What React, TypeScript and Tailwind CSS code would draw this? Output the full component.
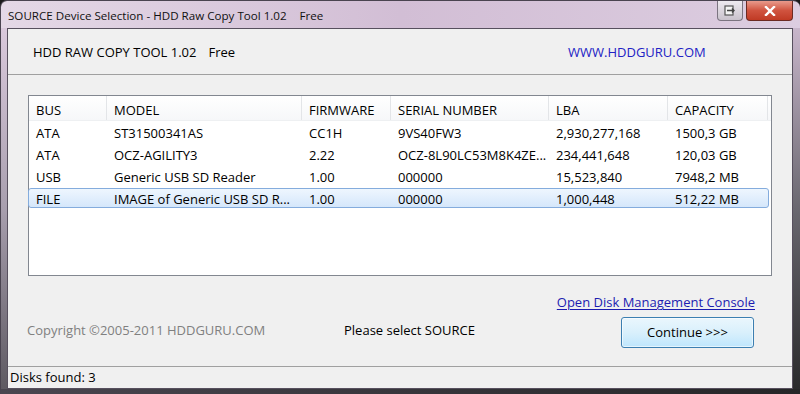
import React from "react";

const cols = [78, 195, 89, 158, 119, 100];
const headers = ["BUS", "MODEL", "FIRMWARE", "SERIAL NUMBER", "LBA", "CAPACITY"];
const rows = [
  ["ATA", "ST31500341AS", "CC1H", "9VS40FW3", "2,930,277,168", "1500,3 GB"],
  ["ATA", "OCZ-AGILITY3", "2.22", "OCZ-8L90LC53M8K4ZE...", "234,441,648", "120,03 GB"],
  ["USB", "Generic USB SD Reader", "1.00", "000000", "15,523,840", "7948,2 MB"],
  ["FILE", "IMAGE of Generic USB SD R...", "1.00", "000000", "1,000,448", "512,22 MB"],
];

function Cells({ r, sep }: { r: string[]; sep?: boolean }) {
  return (
    <>
      {r.map((c, i) => (
        <div
          key={i}
          style={{ width: cols[i] }}
          className={`shrink-0 pl-[7px] whitespace-nowrap overflow-hidden ${sep ? "border-r border-[#e3e5e8] h-full flex items-center pt-[6px]" : "pt-[4px]"}`}
        >
          {c}
        </div>
      ))}
    </>
  );
}

export default function App() {
  return (
    <div
      className="w-[800px] h-[394px] overflow-hidden bg-[#1a1a1a] text-[13px] text-black"
      style={{ fontFamily: '"Open Sans", "Noto Sans", sans-serif' }}
    >
      <div className="w-full h-full flex flex-col rounded-tl-[7px] rounded-tr-[7px] overflow-hidden border-l border-t border-[#4a4450]">
        {/* Title bar */}
        <div className="h-[27px] shrink-0 flex bg-gradient-to-r from-[#e4d8e6] via-[#d2bed5] to-[#dccde0]">
          <div className="pl-[7px] pt-[7px] flex text-[11.6px] leading-[16px] text-[#111]">
            <span>SOURCE Device Selection - HDD Raw Copy Tool 1.02</span>
            <span className="ml-[13px]">Free</span>
          </div>
          <div className="ml-auto flex items-start gap-[3px] mr-[7px]">
            <div className="w-[26px] h-[20px] rounded-b-[4px] border border-t-0 border-[#7b7480] bg-gradient-to-b from-[#eeeaf0] to-[#c9c2cc] flex items-center justify-center">
              <svg width="12" height="11" viewBox="0 0 12 11">
                <rect x="1" y="1" width="8" height="9" fill="#f4f4f4" stroke="#555" strokeWidth="1.2" />
                <path d="M3 5.5h7M8 3.5l2 2-2 2" stroke="#444" strokeWidth="1.4" fill="none" />
              </svg>
            </div>
            <div className="w-[47px] h-[20px] rounded-b-[4px] border border-t-0 border-[#6b2a22] bg-gradient-to-b from-[#e89a8c] via-[#d0533f] to-[#c03a24] flex items-center justify-center">
              <svg width="12" height="10" viewBox="0 0 12 10">
                <path d="M2 1l8 8M10 1L2 9" stroke="#ffffff" strokeWidth="2.4" strokeLinecap="square" />
              </svg>
            </div>
          </div>
        </div>
        {/* Middle */}
        <div className="flex flex-1 min-h-0">
          <div className="w-[6px] shrink-0 bg-gradient-to-b from-[#dac9dc] via-[#a89fae] to-[#5e5a62]" />
          <div className="w-[786px] shrink-0 border border-[#57505e] bg-[#f0f0f0] flex flex-col">
            {/* header */}
            <div className="h-[46px] shrink-0 flex items-center pt-[2px] border-b border-[#a0a0a0]">
              <div className="ml-[25px] w-[535px] flex">
                <span>HDD RAW COPY TOOL 1.02</span>
                <span className="ml-[12px]">Free</span>
              </div>
              <span className="text-[#2222c4]">WWW.HDDGURU.COM</span>
            </div>
            {/* main */}
            <div className="h-[291px] shrink-0 flex flex-col">
              <div className="ml-[20px] mt-[20px] w-[744px] h-[181px] border border-[#828790] bg-white flex flex-col">
                <div className="h-[25px] shrink-0 flex items-center bg-gradient-to-b from-white to-[#f6f7f9] border-b border-[#eef0f2]">
                  <Cells r={headers} sep />
                </div>
                {rows.map((r, i) =>
                  i === 3 ? (
                    <div key={i} className="h-[22px] shrink-0 py-[1px]">
                      <div className="h-full w-[741px] flex items-center rounded-[3px] border border-[#84acdd] bg-gradient-to-b from-[#eef6fe] to-[#d5e7fb] -ml-px">
                        <Cells r={r} />
                      </div>
                    </div>
                  ) : (
                    <div key={i} className="h-[22px] shrink-0 flex items-center">
                      <Cells r={r} />
                    </div>
                  )
                )}
              </div>
              <div className="flex justify-end pr-[37px] mt-[18px] h-[18px] items-center">
                <span className="text-[#1c1cb0] underline underline-offset-2">Open Disk Management Console</span>
              </div>
              <div className="flex items-center mt-[5px]">
                <span className="ml-[19px] w-[317px] text-[#808080] -mt-[4px]">Copyright ©2005-2011 HDDGURU.COM</span>
                <span className="w-[277px] -mt-[4px]">Please select SOURCE</span>
                <div className="w-[133px] h-[31px] rounded-[3px] border border-[#3c7fb1] bg-gradient-to-b from-[#eaf6fd] via-[#d9f0fc] to-[#bee6fd] flex items-center justify-center shadow-[inset_0_0_0_1px_rgba(255,255,255,0.6)]">
                  Continue &gt;&gt;&gt;
                </div>
              </div>
            </div>
            {/* status */}
            <div className="flex-1 border-t border-[#a0a0a0] flex items-center pl-[2px]">
              Disks found: 3
            </div>
          </div>
          <div className="w-[7px] shrink-0 bg-gradient-to-b from-[#c8b6cb] via-[#6a6870] to-[#2a2a2c]" />
        </div>
        <div className="h-[5px] shrink-0 bg-gradient-to-r from-[#4a4650] to-[#262628]" />
      </div>
    </div>
  );
}
